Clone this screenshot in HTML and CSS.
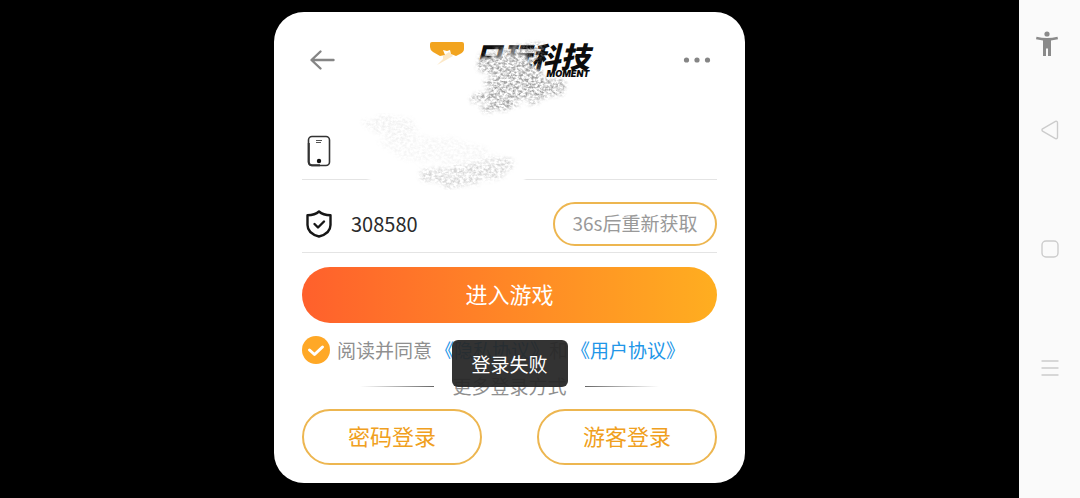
FILE: index.html
```html
<!DOCTYPE html>
<html lang="zh-CN">
<head>
  <meta charset="UTF-8">
  <meta name="viewport" content="width=device-width, initial-scale=1">
  <title>登录</title>
  <link rel="stylesheet" href="styles.css">
</head>
<body>

<main class="stage">
  <form class="card" onsubmit="return false">
    <header class="card-header">
      <button type="button" class="icon-btn" aria-label="返回">
        <svg width="28" height="24" viewBox="0 0 28 24" fill="none" stroke="#858585" stroke-width="2.4" stroke-linecap="round" stroke-linejoin="round">
          <path d="M25.500 12H4M12.500 3.500L3.500 12L12.500 20.500"/>
        </svg>
      </button>

      <div class="brand">
        <svg class="brand-mark" width="36" height="36" viewBox="0 0 36 36">
          <path d="M1 3Q1 1 3 1H33Q35 1 35 3V8Q35 11 31 13L27 15L22 13L21 9L18 10L14 9L16 14L11 15L4 11Q1 9 1 6Z" fill="#f2a41f"/>
          <path d="M14 15L20 11L24 15L17 19L8 24L14 18Z" fill="#f2a41f" opacity=".25"/>
        </svg>
        <div class="brand-text">
          <span class="brand-name">只玩科技</span>
          <span class="brand-sub">MOMENT</span>
        </div>
        <!-- pencil smudge over the logo -->
        <svg class="smudge-logo" width="130" height="86" viewBox="0 0 130 86">
          <defs>
            <filter id="grain" x="-10%" y="-10%" width="120%" height="120%">
              <feTurbulence type="fractalNoise" baseFrequency=".32 .42" numOctaves="3" seed="6" result="n"/>
              <feColorMatrix in="n" type="matrix" values="0 0 0 0 .25  0 0 0 0 .25  0 0 0 0 .25  2.600 0 0 0 -.9" result="g"/>
              <feTurbulence type="fractalNoise" baseFrequency=".06 .16" numOctaves="2" seed="9" result="w"/>
              <feDisplacementMap in="SourceGraphic" in2="w" scale="14" result="d"/>
              <feGaussianBlur in="d" stdDeviation="2" result="s"/>
              <feComposite in="g" in2="s" operator="in"/>
            </filter>
            <filter id="soft" x="-20%" y="-20%" width="140%" height="140%">
              <feTurbulence type="fractalNoise" baseFrequency=".15" numOctaves="2" seed="3" result="n"/>
              <feDisplacementMap in="SourceGraphic" in2="n" scale="10" result="d"/>
              <feGaussianBlur in="d" stdDeviation="1"/>
            </filter>
          </defs>
          <path d="M10 27L40 20L62 20L68 33L76 36L74 47H10Z" fill="#fff" filter="url(#soft)"/>
          <path d="M32 14L58 12L60 24L34 24Z" fill="#fff" opacity=".4" filter="url(#soft)"/>
          <path d="M16 24L40 16L78 7L84 12L76 30L78 44L100 46L104 56L84 64L50 70L20 79L18 73L32 66L6 68L24 56L20 46L28 40L14 36Z" fill="#000" opacity=".8" filter="url(#grain)"/>
        </svg>
      </div>

      <button type="button" class="icon-btn" aria-label="更多">
        <svg width="28" height="24" viewBox="0 0 28 24" fill="#858585">
          <circle cx="3.500" cy="12" r="2.600"/><circle cx="14" cy="12" r="2.600"/><circle cx="24.500" cy="12" r="2.600"/>
        </svg>
      </button>
    </header>

    <div class="field">
      <label class="field-icon" for="phone" aria-label="手机号">
        <svg width="24" height="32" viewBox="0 0 24 32" fill="none" stroke="#333">
          <rect x="1.500" y="1.500" width="21" height="29" rx="3.500" stroke-width="1.600"/>
          <path d="M1.800 8V27Q2 30.300 5 30.300H13" stroke-width="2"/>
          <path d="M9 5.500H15M9 7.500H14" stroke-width="1" stroke="#555"/>
          <circle cx="12" cy="26" r="2.200" fill="#111" stroke="none"/>
        </svg>
      </label>
      <input type="tel" id="phone" class="field-input">
      <svg class="smudge-phone" width="210" height="96" viewBox="0 0 210 96">
        <path d="M40 70Q70 60 110 64Q150 60 190 66Q206 72 192 78Q120 88 50 80Z" fill="#fff" filter="url(#soft)"/>
        <path d="M36 16Q60 4 86 12Q98 22 80 32Q60 36 46 24Z" fill="#000" opacity=".12" filter="url(#grain)"/>
        <path d="M50 36Q110 20 150 38L186 52Q150 60 80 54Z" fill="#000" opacity=".08" filter="url(#grain)"/>
        <path d="M94 64L134 58L188 52L186 62L164 74L124 80L96 74Z" fill="#000" opacity=".35" filter="url(#grain)"/>
      </svg>
    </div>

    <div class="field">
      <label class="field-icon" for="code" aria-label="验证码">
        <svg width="26" height="28" viewBox="0 0 26 28" fill="none" stroke="#161616" stroke-width="2.400" stroke-linejoin="round" stroke-linecap="round">
          <path d="M13 1.500Q17 5.200 24.500 5.200V15Q24.500 23.500 13 26.500Q1.500 23.500 1.500 15V5.200Q9 5.200 13 1.500Z"/>
          <path d="M8.500 14L12 17.500L18 11.500"/>
        </svg>
      </label>
      <input type="text" id="code" class="field-input" value="308580">
      <button type="button" class="resend">36s后重新获取</button>
    </div>

    <button type="submit" class="enter">进入游戏</button>

    <div class="agreement">
      <input type="checkbox" id="agree" class="agree-box" checked>
      <label for="agree">阅读并同意</label>
      <span><a href="#privacy">《隐私协议》</a>和</span>
      <a href="#terms">《用户协议》</a>
    </div>

    <div class="more">更多登录方式</div>

    <div class="other-logins">
      <button type="button" class="outline">密码登录</button>
      <button type="button" class="outline">游客登录</button>
    </div>

    <div class="toast" role="status">登录失败</div>
  </form>
</main>

<nav class="system-bar">
  <button type="button" class="sys-btn sys-access" aria-label="无障碍">
    <svg width="24" height="26" viewBox="0 0 24 26" fill="#8a8a8a">
      <circle cx="12" cy="3" r="2.600"/>
      <path d="M1.500 5.700Q12 8.300 22.500 5.700L23 8.200L16 9.500V25H13V17.500H11V25H8V9.500L1 8.200Z"/>
    </svg>
  </button>
  <button type="button" class="sys-btn" aria-label="返回键">
    <svg width="18" height="20" viewBox="0 0 18 20" fill="none" stroke="#ccc" stroke-width="1.400" stroke-linejoin="round">
      <path d="M1.500 8.800L14.500 1.400Q16.500 .8 16.500 3V17Q16.500 19.200 14.500 18.600L1.500 11.200Q.5 10 1.500 8.800Z"/>
    </svg>
  </button>
  <button type="button" class="sys-btn" aria-label="主页">
    <svg width="18" height="18" viewBox="0 0 18 18" fill="none" stroke="#ccc" stroke-width="1.400">
      <rect x="1" y="1" width="16" height="16" rx="4"/>
    </svg>
  </button>
  <button type="button" class="sys-btn" aria-label="最近任务">
    <svg width="18" height="18" viewBox="0 0 18 18" stroke="#ccc" stroke-width="1.300">
      <path d="M.5 2H17.500M.5 9H17.500M.5 16H17.500"/>
    </svg>
  </button>
</nav>

</body>
</html>
```

FILE: styles.css
```css
* {
  box-sizing: border-box;
}

body {
  margin: 0;
  display: flex;
  min-height: 100vh;
  background: #000;
  font-family: "Noto Sans CJK SC", sans-serif;
  font-size: 19px;
  color: #8f8f8f;
}

button, input {
  font: inherit;
  padding: 0;
  margin: 0;
  border: 0;
  background: none;
}

button {
  cursor: pointer;
}

svg {
  display: block;
}

a {
  color: #2196e8;
  text-decoration: none;
}

.stage {
  flex: 1;
  display: flex;
  justify-content: center;
  align-items: flex-start;
  padding: 12px;
}

.card {
  position: relative;
  width: 100%;
  max-width: 471px;
  padding: 0 28px 18px;
  background: #fff;
  border-radius: 30px;
}

.card-header {
  display: flex;
  align-items: center;
  justify-content: space-between;
  height: 95px;
  padding: 0 6px;
}

/* Logo */
.brand {
  position: relative;
  display: flex;
  gap: 8px;
}

.brand-text {
  display: flex;
  flex-direction: column;
  align-items: flex-end;
  color: #0c0c0c;
  font-style: italic;
  font-weight: 900;
}

.brand-name {
  font-size: 29px;
  line-height: 28px;
}

.brand-sub {
  font-family: Inter, "Liberation Sans", sans-serif;
  font-size: 9px;
  line-height: 10px;
}

.smudge-logo {
  position: absolute;
  top: -7px;
  left: 34px;
}

/* Fields */
.field {
  position: relative;
  display: flex;
  align-items: center;
  height: 73px;
  padding-top: 15px;
  border-bottom: 1px solid #e4e4e4;
}

.field-icon {
  display: flex;
  justify-content: center;
  width: 34px;
}

.field-input {
  flex: 1;
  min-width: 0;
  margin-left: 15px;
  font-size: 20px;
  color: #2b2b2b;
  outline: none;
}

.smudge-phone {
  position: absolute;
  top: 0;
  left: 24px;
  pointer-events: none;
}

.resend {
  width: 164px;
  height: 44px;
  padding-bottom: 2px;
  border: 2px solid #edb650;
  border-radius: 22px;
  color: #999;
}

.enter {
  display: block;
  width: 100%;
  height: 56px;
  margin-top: 14px;
  padding-bottom: 4px;
  border-radius: 28px;
  background: linear-gradient(90deg, #ff602c, #ffae20);
  color: #fff;
  font-size: 22px;
}

.agreement {
  display: flex;
  align-items: center;
  gap: 3px;
  height: 28px;
  margin-top: 13px;
  line-height: 28px;
  white-space: nowrap;
}

.agree-box {
  appearance: none;
  width: 28px;
  height: 28px;
  margin-right: 4px;
  border-radius: 50%;
  background: #ffa826;
}

.agree-box:checked {
  background: #ffa826 url("data:image/svg+xml,%3Csvg xmlns='http://www.w3.org/2000/svg' viewBox='0 0 28 28' fill='none' stroke='white' stroke-width='3' stroke-linecap='round' stroke-linejoin='round'%3E%3Cpath d='M7.500 14L12.500 18.500L20.500 11'/%3E%3C/svg%3E");
}

.more {
  display: flex;
  align-items: center;
  justify-content: center;
  gap: 18px;
  margin-top: 8px;
  line-height: 28px;
}

.more::before,
.more::after {
  content: "";
  width: 74px;
  height: 1px;
  background: linear-gradient(90deg, transparent, #666);
}

.more::after {
  background: linear-gradient(90deg, #666, transparent);
}

.other-logins {
  display: flex;
  justify-content: space-between;
  margin-top: 9px;
}

.outline {
  width: 180px;
  height: 56px;
  padding-bottom: 4px;
  border: 2px solid #edb650;
  border-radius: 28px;
  color: #f0a020;
  font-size: 22px;
}

.toast {
  position: absolute;
  top: 328px;
  left: 50%;
  transform: translateX(-50%);
  padding: 0 20px;
  border-radius: 6px;
  background: rgba(40, 40, 40, .95);
  color: #fff;
  line-height: 47px;
  white-space: nowrap;
}

/* System navigation */
.system-bar {
  display: flex;
  flex-direction: column;
  align-items: center;
  gap: 79px;
  width: 61px;
  padding-top: 24px;
  background: #fafafa;
}

.sys-btn {
  display: flex;
  align-items: center;
  justify-content: center;
  width: 40px;
  height: 40px;
}

.sys-access {
  margin: 0 6px -33px 0;
}
```
